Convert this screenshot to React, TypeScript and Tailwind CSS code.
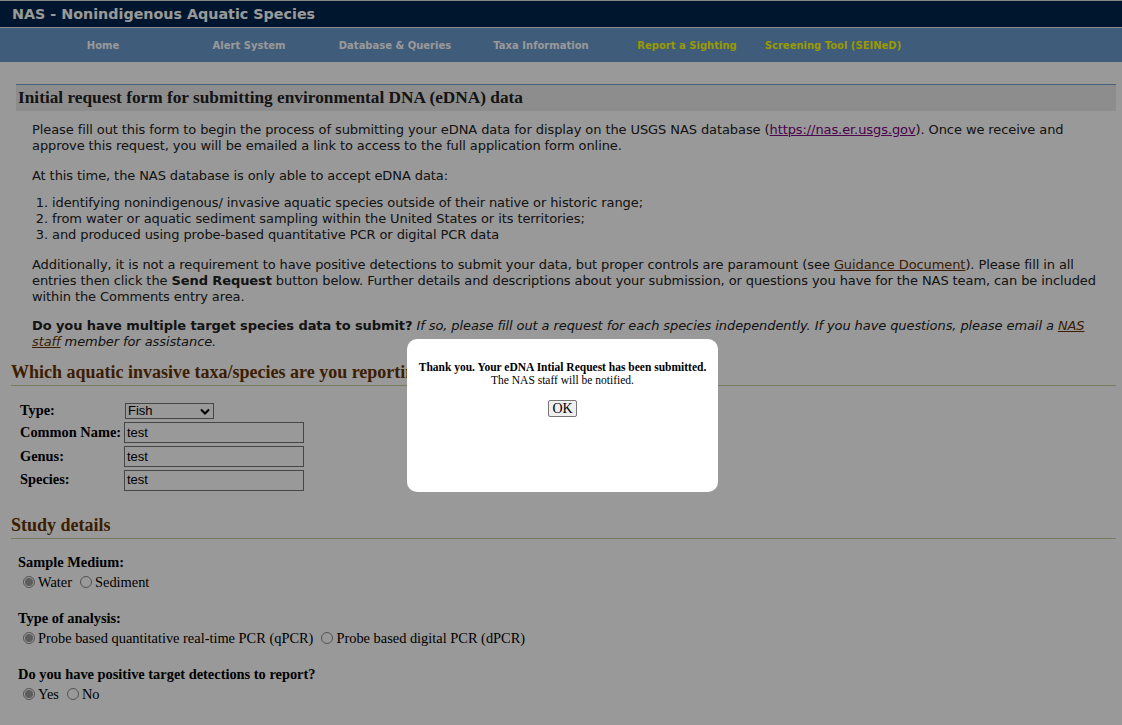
import React from "react";

function Radio({ checked }: { checked?: boolean }) {
  return (
    <span className="inline-flex items-center justify-center w-[12px] h-[12px] rounded-full border border-[#8a8a8a] bg-white ml-[5px] mr-[3px] shrink-0">
      {checked && <span className="block w-[8px] h-[8px] rounded-full bg-[#9a9a9a]" />}
    </span>
  );
}

function RadioOpt({ checked, label }: { checked?: boolean; label: string }) {
  return (
    <span className="inline-flex items-center mr-[3px]">
      <Radio checked={checked} />
      <span>{label}</span>
    </span>
  );
}

function Field({ value }: { value: string }) {
  return (
    <div className="w-[180px] h-[21px] border border-[#767676] bg-white pl-[2px] flex items-center font-['Liberation_Sans',Arial,sans-serif] font-normal text-[13px] text-black">
      {value}
    </div>
  );
}

export default function App() {
  const navItems: { label: string; yellow?: boolean }[] = [
    { label: "Home" },
    { label: "Alert System" },
    { label: "Database & Queries" },
    { label: "Taxa Information" },
    { label: "Report a Sighting", yellow: true },
    { label: "Screening Tool (SEINeD)", yellow: true },
  ];

  return (
    <div className="relative min-h-screen bg-white font-['DejaVu_Sans',Verdana,sans-serif] text-[#222] overflow-hidden">
      {/* Header */}
      <div className="border-t border-[#e0e0e0] bg-[#00254d] h-[27px] flex items-center pl-[12px]">
        <span className="text-white font-bold text-[14.3px] leading-none">NAS - Nonindigenous Aquatic Species</span>
      </div>
      <div className="border-t border-[#e8e8e8] bg-[#6999cb] h-[35px] flex items-center pl-[30px]">
        {navItems.map((n) => (
          <div
            key={n.label}
            className={`w-[146px] text-center font-bold text-[10px] ${n.yellow ? "text-[#ffff00]" : "text-white"}`}
          >
            {n.label}
          </div>
        ))}
      </div>

      {/* Intro */}
      <div className="ml-[16px] w-[1100px] mt-[22px]">
        <div className="border-t border-[#7ba4cc] bg-[#ececec] h-[27px] flex items-center pl-[2px]">
          <h1 className="font-['Liberation_Serif','Times_New_Roman',serif] font-bold text-[17.3px] text-[#222]">
            Initial request form for submitting environmental DNA (eDNA) data
          </h1>
        </div>
        <div className="pl-[16px] pr-[18px] text-[13px] leading-[16px] tracking-[-0.09px]">
          <p className="mt-[11px]">
            Please fill out this form to begin the process of submitting your eDNA data for display on the USGS NAS database (
            <span className="text-[#800080] underline">https://nas.er.usgs.gov</span>). Once we receive and approve this request, you will be emailed a link to access to the full application form online.
          </p>
          <p className="mt-[14px]">At this time, the NAS database is only able to accept eDNA data:</p>
          <ol className="mt-[11px] list-decimal pl-[20px]">
            <li>identifying nonindigenous/ invasive aquatic species outside of their native or historic range;</li>
            <li>from water or aquatic sediment sampling within the United States or its territories;</li>
            <li>and produced using probe-based quantitative PCR or digital PCR data</li>
          </ol>
          <p className="mt-[14px]">
            Additionally, it is not a requirement to have positive detections to submit your data, but proper controls are paramount (see{" "}
            <span className="text-[#663300] underline">Guidance Document</span>). Please fill in all entries then click the <b>Send Request</b> button below. Further details and descriptions about your submission, or questions you have for the NAS team, can be included within the Comments entry area.
          </p>
          <p className="mt-[13px]">
            <b>Do you have multiple target species data to submit?</b>{" "}
            <i>
              If so, please fill out a request for each species independently. If you have questions, please email a{" "}
              <span className="text-[#663300] underline">NAS staff</span> member for assistance.
            </i>
          </p>
        </div>
      </div>

      {/* Form */}
      <div className="ml-[11px] w-[1105px] font-['Liberation_Serif','Times_New_Roman',serif] text-black">
        <h2 className="mt-[12px] font-bold text-[18px] leading-[21px] text-[#663300] border-b border-[#cccc99] pb-[2px]">
          Which aquatic invasive taxa/species are you reporting?
        </h2>

        <div className="mt-[16px] ml-[9px] grid grid-cols-[104px_auto] gap-y-[2px] items-center text-[14.4px] font-bold">
          <div className="h-[18px] flex items-center">Type:</div>
          <div className="h-[18px] flex items-center">
            <div className="w-[89px] h-[16px] ml-[1px] border border-[#767676] bg-white flex items-center justify-between pl-[2px] pr-[3px] font-['Liberation_Sans',Arial,sans-serif] font-normal text-[13px]">
              <span>Fish</span>
              <svg width="10" height="7" viewBox="0 0 10 7">
                <path d="M1 1.5 L5 5.5 L9 1.5" stroke="#000" strokeWidth="2" fill="none" />
              </svg>
            </div>
          </div>
          <div>Common Name:</div>
          <Field value="test" />
          <div>Genus:</div>
          <Field value="test" />
          <div>Species:</div>
          <Field value="test" />
        </div>

        <h2 className="mt-[24px] font-bold text-[18px] leading-[21px] text-[#663300] border-b border-[#cccc99] pb-[2px]">
          Study details
        </h2>

        <div className="pl-[7px] text-[14.4px] leading-[16px]">
          <div className="mt-[15px]">
            <div className="font-bold">Sample Medium:</div>
            <div className="mt-[4px] flex items-center">
              <RadioOpt checked label="Water" />
              <RadioOpt label="Sediment" />
            </div>
          </div>
          <div className="mt-[20px]">
            <div className="font-bold">Type of analysis:</div>
            <div className="mt-[4px] flex items-center">
              <RadioOpt checked label="Probe based quantitative real-time PCR (qPCR)" />
              <RadioOpt label="Probe based digital PCR (dPCR)" />
            </div>
          </div>
          <div className="mt-[20px]">
            <div className="font-bold">Do you have positive target detections to report?</div>
            <div className="mt-[4px] flex items-center">
              <RadioOpt checked label="Yes" />
              <RadioOpt label="No" />
            </div>
          </div>
        </div>
      </div>

      {/* Overlay */}
      <div className="fixed inset-0 bg-black/40" />

      {/* Modal */}
      <div className="fixed left-[407px] top-[339px] w-[311px] h-[153px] bg-white rounded-[10px] font-['Liberation_Serif','Times_New_Roman',serif] text-black text-center pt-[22px]">
        <div className="font-bold text-[11.5px] leading-[13px]">Thank you. Your eDNA Intial Request has been submitted.</div>
        <div className="text-[11.5px] leading-[13px]">The NAS staff will be notified.</div>
        <div className="mt-[13px] flex justify-center">
          <button className="w-[29px] h-[17px] border border-[#767676] bg-[#efefef] rounded-[2px] text-[14px] leading-none flex items-center justify-center">
            OK
          </button>
        </div>
      </div>
    </div>
  );
}
